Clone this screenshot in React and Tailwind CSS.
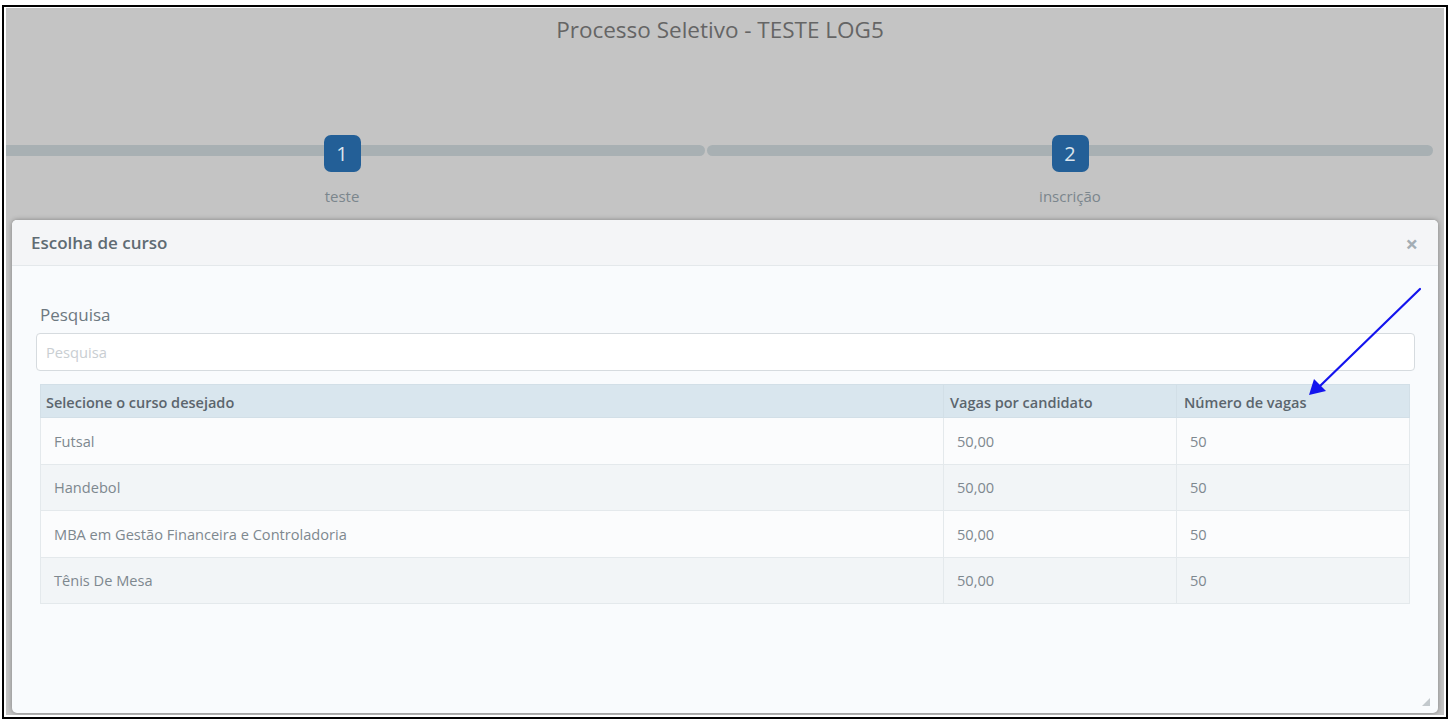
import React from 'react';

const cursos = [
   { nome: 'Futsal', vagasPorCandidato: '50,00', vagas: '50' },
   { nome: 'Handebol', vagasPorCandidato: '50,00', vagas: '50' },
   { nome: 'MBA em Gestão Financeira e Controladoria', vagasPorCandidato: '50,00', vagas: '50' },
   { nome: 'Tênis De Mesa', vagasPorCandidato: '50,00', vagas: '50' },
];

const Step = ({ num, label }) => (
   <div className="flex flex-col items-center">
      <div className="relative h-[37px] w-full flex justify-center">
         <div className="absolute left-0 right-0 top-[10px] h-[11px] bg-[#a8b0b3] rounded-full" />
         <div className="relative h-[37px] w-[37px] rounded-[7px] bg-[#235f97] flex items-center justify-center text-[20px] text-[#dbe5ee]">
            {num}
         </div>
      </div>
      <span className="mt-[14px] leading-[20px] text-[15px] text-[#7b868d]">{label}</span>
   </div>
);

const App = () => {
   return (
      <div className="relative w-[1451px] h-[725px] bg-white pt-[5px] pl-[2px]" style={{ fontFamily: '"Open Sans", "Noto Sans", sans-serif' }}>
         <div className="w-[1446px] h-[714px] border-2 border-black px-[2px] pt-px pb-[2px]">
            <div className="h-full bg-[#c4c4c4] overflow-hidden flex flex-col px-[6px]">

               {/* Title */}
               <h1 className="pt-[8px] pr-[10px] leading-[28px] text-center text-[22.5px] text-[#656565] font-medium">
                  Processo Seletivo - TESTE LOG5
               </h1>

               {/* Stepper */}
               <div className="mt-[91px] -ml-[33px] w-[1454px] grid grid-cols-2 gap-[2px]">
                  <Step num="1" label="teste" />
                  <Step num="2" label="inscrição" />
               </div>

               {/* Modal */}
               <div className="relative mt-[14px] mb-[2px] flex-1 flex flex-col rounded-[5px] bg-[#f9fbfd] shadow-[0_0_5px_rgba(0,0,0,0.35)]">
                  <div className="h-[46px] shrink-0 flex items-center justify-between pl-[19px] pr-[20px] bg-[#f4f5f7] border-b border-[#e4e8eb] rounded-t-[5px]">
                     <h3 className="text-[17px] font-semibold text-[#5f6b73]">Escolha de curso</h3>
                     <span className="text-[22px] font-bold leading-none text-[#a3adb4]">×</span>
                  </div>

                  <div className="pl-[24px] pr-[23px]">
                     <label className="block mt-[38px] pl-[4px] leading-[22px] text-[17px] text-[#6d7880]">Pesquisa</label>
                     <input
                        type="text"
                        placeholder="Pesquisa"
                        className="mt-[7px] w-full h-[38px] rounded-[4px] border border-[#d6dbdf] bg-white px-[9px] text-[14.7px] text-[#5f6b73] placeholder:text-[#c9ced2] outline-none"
                     />

                     <table className="mt-[13px] ml-[4px] w-[1370px] border-collapse table-fixed">
                        <thead>
                           <tr className="bg-[#d9e6ee] h-[33px] text-left text-[14.5px] font-semibold text-[#5b656d]">
                              <th className="w-[903px] pl-[5px] pt-[4px] font-semibold border border-[#d2dfe7]">Selecione o curso desejado</th>
                              <th className="w-[233px] pl-[6px] pt-[4px] font-semibold border border-[#d2dfe7]">Vagas por candidato</th>
                              <th className="pl-[7px] pt-[4px] font-semibold border border-[#d2dfe7]">Número de vagas</th>
                           </tr>
                        </thead>
                        <tbody>
                           {cursos.map((c, i) => (
                              <tr key={c.nome} className={`h-[46.5px] text-[14.6px] text-[#7e888f] ${i % 2 === 1 ? 'bg-[#f2f5f7]' : 'bg-[#fbfcfd]'}`}>
                                 <td className="pl-[13px] pt-[2px] border border-[#e4e9ec]">{c.nome}</td>
                                 <td className="pl-[13px] pt-[2px] border border-[#e4e9ec]">{c.vagasPorCandidato}</td>
                                 <td className="pl-[13px] pt-[2px] border border-[#e4e9ec]">{c.vagas}</td>
                              </tr>
                           ))}
                        </tbody>
                     </table>
                  </div>

                  {/* resize grip */}
                  <svg className="absolute right-[8px] bottom-[7px]" width="8" height="8" viewBox="0 0 8 8">
                     <path d="M8 0 L8 8 L0 8 Z" fill="#c3c9cd" />
                  </svg>
               </div>
            </div>
         </div>

         {/* annotation arrow */}
         <svg className="absolute left-0 top-0 pointer-events-none" width="1451" height="725">
            <line x1="1420" y1="289" x2="1320" y2="386" stroke="#1414ee" strokeWidth="2.2" strokeLinecap="round" />
            <path d="M1309 395 L1314 379 L1326 391 Z" fill="#1414ee" />
         </svg>
      </div>
   );
};

export default App;
